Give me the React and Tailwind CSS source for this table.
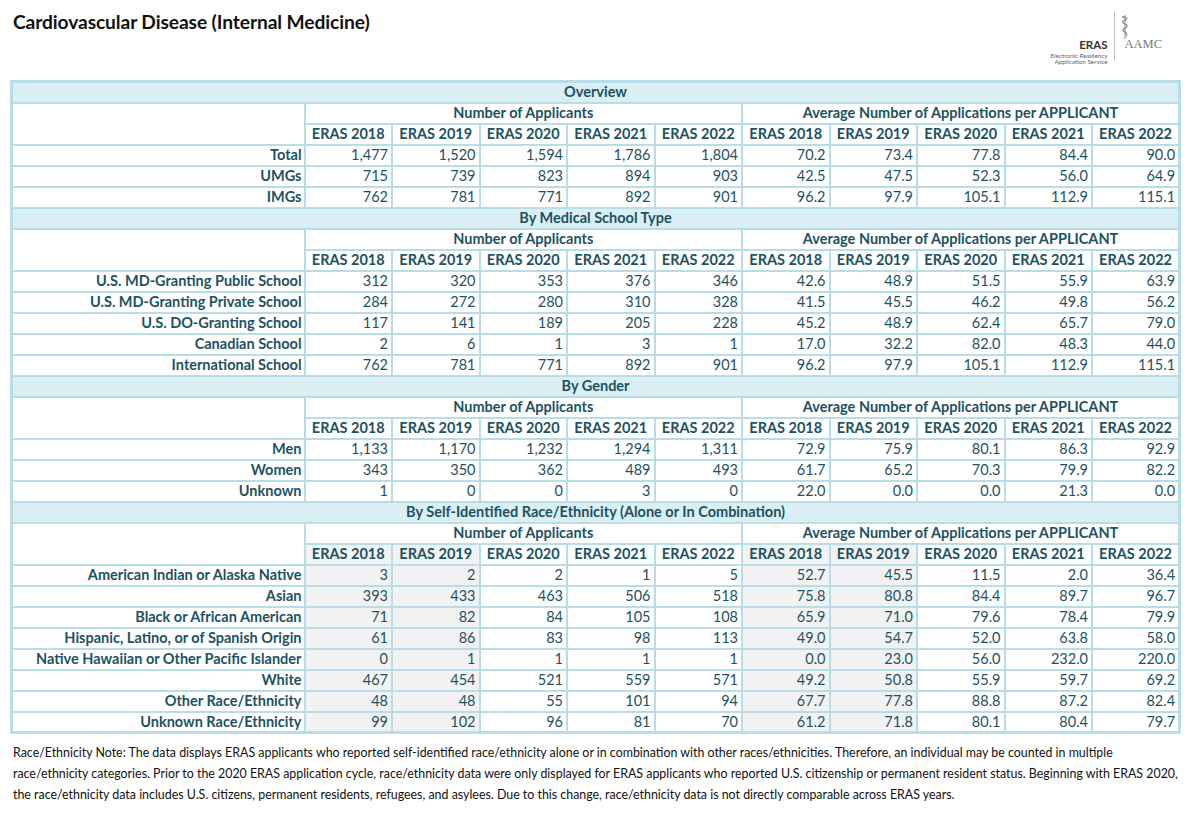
import React from "react";

const years = ["ERAS 2018", "ERAS 2019", "ERAS 2020", "ERAS 2021", "ERAS 2022"];

const sections = [
  {
    title: "Overview",
    rows: [
      ["Total", "1,477", "1,520", "1,594", "1,786", "1,804", "70.2", "73.4", "77.8", "84.4", "90.0"],
      ["UMGs", "715", "739", "823", "894", "903", "42.5", "47.5", "52.3", "56.0", "64.9"],
      ["IMGs", "762", "781", "771", "892", "901", "96.2", "97.9", "105.1", "112.9", "115.1"],
    ],
  },
  {
    title: "By Medical School Type",
    rows: [
      ["U.S. MD-Granting Public School", "312", "320", "353", "376", "346", "42.6", "48.9", "51.5", "55.9", "63.9"],
      ["U.S. MD-Granting Private School", "284", "272", "280", "310", "328", "41.5", "45.5", "46.2", "49.8", "56.2"],
      ["U.S. DO-Granting School", "117", "141", "189", "205", "228", "45.2", "48.9", "62.4", "65.7", "79.0"],
      ["Canadian School", "2", "6", "1", "3", "1", "17.0", "32.2", "82.0", "48.3", "44.0"],
      ["International School", "762", "781", "771", "892", "901", "96.2", "97.9", "105.1", "112.9", "115.1"],
    ],
  },
  {
    title: "By Gender",
    rows: [
      ["Men", "1,133", "1,170", "1,232", "1,294", "1,311", "72.9", "75.9", "80.1", "86.3", "92.9"],
      ["Women", "343", "350", "362", "489", "493", "61.7", "65.2", "70.3", "79.9", "82.2"],
      ["Unknown", "1", "0", "0", "3", "0", "22.0", "0.0", "0.0", "21.3", "0.0"],
    ],
  },
  {
    title: "By Self-Identified Race/Ethnicity (Alone or In Combination)",
    gray: true,
    rows: [
      ["American Indian or Alaska Native", "3", "2", "2", "1", "5", "52.7", "45.5", "11.5", "2.0", "36.4"],
      ["Asian", "393", "433", "463", "506", "518", "75.8", "80.8", "84.4", "89.7", "96.7"],
      ["Black or African American", "71", "82", "84", "105", "108", "65.9", "71.0", "79.6", "78.4", "79.9"],
      ["Hispanic, Latino, or of Spanish Origin", "61", "86", "83", "98", "113", "49.0", "54.7", "52.0", "63.8", "58.0"],
      ["Native Hawaiian or Other Pacific Islander", "0", "1", "1", "1", "1", "0.0", "23.0", "56.0", "232.0", "220.0"],
      ["White", "467", "454", "521", "559", "571", "49.2", "50.8", "55.9", "59.7", "69.2"],
      ["Other Race/Ethnicity", "48", "48", "55", "101", "94", "67.7", "77.8", "88.8", "87.2", "82.4"],
      ["Unknown Race/Ethnicity", "99", "102", "96", "81", "70", "61.2", "71.8", "80.1", "80.4", "79.7"],
    ],
  },
];

const grayCols = [0, 1, 5, 6];

const noteLines = [
  "Race/Ethnicity Note: The data displays ERAS applicants who reported self-identified race/ethnicity alone or in combination with other races/ethnicities. Therefore, an individual may be counted in multiple",
  "race/ethnicity categories. Prior to the 2020 ERAS application cycle, race/ethnicity data were only displayed for ERAS applicants who reported U.S. citizenship or permanent resident status. Beginning with ERAS 2020,",
  "the race/ethnicity data includes U.S. citizens, permanent residents, refugees, and asylees. Due to this change, race/ethnicity data is not directly comparable across ERAS years.",
];

function Logo() {
  return (
    <div className="flex items-start pt-[12px]">
      <div className="flex flex-col items-end pt-[27px] pr-[7px] leading-none">
        <span className="text-[11.5px] font-bold text-[#333]">ERAS</span>
        <span className="text-[6.3px] text-[#666] mt-[2px]">Electronic Residency</span>
        <span className="text-[6.3px] text-[#666]">Application Service</span>
      </div>
      <div className="w-px h-[48px] bg-[#bbb]" />
      <div className="flex flex-col pl-[4px]">
        <svg width="14" height="26" viewBox="0 0 14 26" className="ml-[1px] mt-[2px]">
          <line x1="5" y1="1" x2="5" y2="25" stroke="#888" strokeWidth="1" />
          <path d="M3 3 C7 3 8 5 5 6 C2 7 2 9 5 10 C8 11 8 13 5 14 C2 15 2 17 5 18 C7 19 7 21 6 22" fill="none" stroke="#888" strokeWidth="1.2" />
          <circle cx="3" cy="3" r="1" fill="#888" />
        </svg>
        <span className="text-[12.5px] text-[#777] -mt-[2px] ml-[5px] leading-none" style={{ fontFamily: '"Liberation Serif", serif' }}>AAMC</span>
      </div>
    </div>
  );
}

function App() {
  const cell = "border-2 border-[#b7dee8] h-[21px] p-0";
  return (
    <div className="w-[1200px] h-[825px] bg-white text-black" style={{ fontFamily: "Lato, sans-serif" }}>
      <div className="flex justify-between pl-[13px] pr-[38px] h-[80px]">
        <h1 className="text-[19.2px] font-bold text-[#111] pt-[8px] tracking-[-0.1px]">Cardiovascular Disease (Internal Medicine)</h1>
        <Logo />
      </div>
      <table className="ml-[10px] w-[1168px] border-collapse border-[3px] border-[#b7dee8] text-[14.5px] text-[#1d5262] table-fixed leading-none">
        <colgroup>
          <col className="w-[293px]" />
          {Array.from({ length: 10 }).map((_, i) => (
            <col key={i} className="w-[87.5px]" />
          ))}
        </colgroup>
        <tbody>
          {sections.map((s) => (
            <React.Fragment key={s.title}>
              <tr>
                <td colSpan={11} className={`${cell} bg-[#daeef3] text-center font-bold`}>{s.title}</td>
              </tr>
              <tr>
                <td rowSpan={2} className={`${cell} bg-white`} />
                <td colSpan={5} className={`${cell} text-center font-bold`}>Number of Applicants</td>
                <td colSpan={5} className={`${cell} text-center font-bold`}>Average Number of Applications per APPLICANT</td>
              </tr>
              <tr>
                {[...years, ...years].map((y, i) => (
                  <td
                    key={i}
                    className={`${cell} text-center font-bold ${s.gray && grayCols.includes(i) ? "bg-[#f2f2f2]" : ""}`}
                  >
                    {y}
                  </td>
                ))}
              </tr>
              {s.rows.map((r) => (
                <tr key={r[0]}>
                  <td className={`${cell} text-right font-bold pr-[2px] whitespace-nowrap`}>{r[0]}</td>
                  {r.slice(1).map((v, i) => (
                    <td
                      key={i}
                      className={`${cell} text-right pr-[3px] ${s.gray && grayCols.includes(i) ? "bg-[#f2f2f2]" : ""}`}
                    >
                      {v}
                    </td>
                  ))}
                </tr>
              ))}
            </React.Fragment>
          ))}
        </tbody>
      </table>
      <div className="pl-[13px] pt-[8px] text-[12.4px] leading-[21px] text-[#111]">
        {noteLines.map((l, i) => (
          <div key={i} className="whitespace-nowrap">{l}</div>
        ))}
      </div>
    </div>
  );
}

export default App;
